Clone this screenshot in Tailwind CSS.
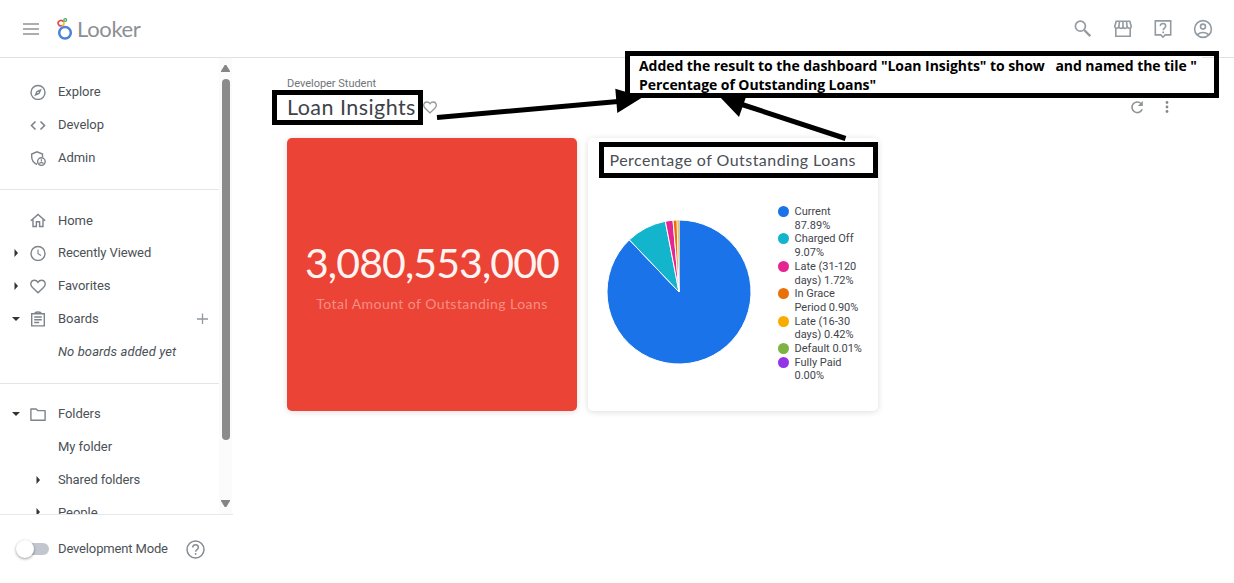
<!DOCTYPE html>
<html lang="en">
<head>
<meta charset="utf-8">
<title>Loan Insights</title>
<script src="https://cdn.jsdelivr.net/npm/@tailwindcss/browser@4"></script>
</head>
<body class="relative flex h-[583px] w-[1234px] flex-col overflow-hidden bg-white font-[Roboto,sans-serif] text-[#4b5157]">
<header class="flex h-[58px] shrink-0 items-center justify-between border-b border-[#e1e2e4] pr-[21px] pl-[23px] text-[#939ba1]">
  <div class="flex items-center">
    <svg class="h-3 w-4" viewBox="0 0 16 12" fill="none" stroke="#8f9498" stroke-width="1.6"><path d="M0 1h16M0 6h16M0 11h16"/></svg>
    <svg class="ml-[18px] h-6 w-4" viewBox="0 0 16 24" fill="none"><circle cx="8" cy="15.8" r="5.8" stroke="#4a82d9" stroke-width="2.5"/><path d="M5 8.6A2.7 2.7 0 1 1 6.300 5" stroke="#e0504a" stroke-width="1.7"/><path d="M5.200 8.700A2.500 2.500 0 0 0 6.700 5.200" stroke="#f3b73b" stroke-width="1.700"/><circle cx="8.200" cy="3" r="1.400" stroke="#4fab62" stroke-width="1.300"/></svg>
    <span class="ml-[4px] font-[Lato,sans-serif] text-[22px] leading-7 tracking-[-0.35px] text-[#8b9095]">Looker</span>
  </div>
  <div class="flex items-center gap-5">
    <svg class="size-5" viewBox="0 0 20 20" fill="none" stroke="currentColor"><circle cx="7.400" cy="7.200" r="5" stroke-width="1.700"/><path d="M11.200 11 17.300 17.100" stroke-width="2.300"/></svg>
    <svg class="size-5" viewBox="0 0 20 20" fill="none" stroke="currentColor" stroke-width="1.600"><path d="M3.200 2.300h13.600l1.400 4.900c0 2.600-3.700 2.800-4.100.3-.3 2.500-4 2.500-4.100 0-.1 2.500-3.800 2.500-4.100 0-.4 2.500-4.100 2.300-4.100-.3zM2.800 9.300v7.900h14.400V9.300M6.500 2.500l-.6 5M10 2.500v5M13.500 2.500l.6 5"/></svg>
    <svg class="size-5" viewBox="0 0 20 20" fill="none" stroke="currentColor" stroke-width="1.600"><path d="M2.300 1.900h15.400v14h-5.500L10 18.200l-2.200-2.300H2.300z"/><path d="M7.300 7c0-3.500 5.400-3.300 5.400 0 0 2-2.500 2.200-2.500 4.200M10.200 12.600v1.700"/></svg>
    <svg class="size-5" viewBox="0 0 20 20" fill="none" stroke="currentColor" stroke-width="1.600"><circle cx="10" cy="10" r="8.400"/><circle cx="10" cy="7.600" r="2.500"/><path d="M4.300 16c2.500-3.300 8.900-3.300 11.400 0"/></svg>
  </div>
</header>
<div class="flex min-h-0 grow">
  <aside class="flex w-[233px] shrink-0 flex-col">
    <div class="flex h-[456px] overflow-hidden">
      <nav class="w-[219px] shrink-0 text-[13px] tracking-[-0.050px] [&_svg]:shrink-0">
        <div class="border-b border-[#e3e5e8] pt-[17.600px] pb-[15px]">
          <div class="flex h-[32.800px] items-center pl-[30px]"><svg class="mr-3 size-4" viewBox="0 0 16 16" fill="none" stroke="#7b838b" stroke-width="1.400"><circle cx="8" cy="8.500" r="7"/><path d="M11.800 4.700 9.500 10l-5.300 2.300L6.500 7z" fill="#7b838b" stroke="none"/><circle cx="8" cy="8.500" r=".8" fill="#fff" stroke="none"/></svg>Explore</div>
          <div class="flex h-[32.800px] items-center pl-[30px]"><svg class="mr-3 size-4" viewBox="0 0 16 16" fill="none" stroke="#7b838b" stroke-width="1.600"><path d="M5.500 4.500 1.500 8.500l4 4M10.500 4.500l4 4-4 4"/></svg>Develop</div>
          <div class="flex h-[32.800px] items-center pl-[30px]"><svg class="mr-3 size-4" viewBox="0 0 16 16" fill="none" stroke="#7b838b" stroke-width="1.400"><path d="M7 14.500C3 12.500 1.700 9.800 1.700 7V4L7 1.800 12.500 4v3"/><circle cx="11.400" cy="11.600" r="3.800"/><path d="M11.400 9.200v2.400M9.300 13.500c1-1.200 3.200-1.200 4.200 0" stroke-width="1.200"/></svg>Admin</div>
        </div>
        <div class="border-b border-[#e3e5e8] pt-[14px] pb-[14.600px]">
          <div class="flex h-[32.800px] items-center pl-[30px]"><svg class="mr-3 size-4" viewBox="0 0 16 16" fill="none" stroke="#7b838b" stroke-width="1.400"><path d="M.8 8.800 8 2.400l7.200 6.400M3 7.500v7h3.400V9.700h3.200v4.800H13v-7"/></svg>Home</div>
          <div class="flex h-[32.800px] items-center pl-[14px]"><svg class="mr-3 h-2 w-1" viewBox="0 0 4 8"><path d="M.5 0 4 4 .5 8z" fill="#333"/></svg><svg class="mr-3 size-4" viewBox="0 0 16 16" fill="none" stroke="#7b838b" stroke-width="1.400"><circle cx="8" cy="8.500" r="7"/><path d="M8 4.500v4.200l3 1.800" stroke-width="1.100"/></svg><span class="tracking-[-0.120px]">Recently Viewed</span></div>
          <div class="flex h-[32.800px] items-center pl-[14px]"><svg class="mr-3 h-2 w-1" viewBox="0 0 4 8"><path d="M.5 0 4 4 .5 8z" fill="#333"/></svg><svg class="mr-3 size-4" viewBox="0 0 16 16" fill="none" stroke="#7b838b" stroke-width="1.400"><path d="M8 14.800 2.500 9.500C-.8 6.100 1.300 2.300 4.300 2.300 6 2.300 7.200 3 8 4.300 8.800 3 10 2.300 11.700 2.300c3 0 5.100 3.800 1.800 7.200z"/></svg>Favorites</div>
          <div class="flex h-[32.800px] items-center pl-[12px]"><svg class="mr-[10px] h-1 w-2" viewBox="0 0 8 4"><path d="M0 0h8L4 4z" fill="#333"/></svg><svg class="mr-3 size-4" viewBox="0 0 16 16" fill="none" stroke="#7b838b" stroke-width="1.400"><path d="M1.700 2.700h12.600v12.200H1.700zM5 2.500C5 .4 11 .4 11 2.500M4.200 6h7.600M4.200 8.700h7.600M4.200 11.500h5"/></svg>Boards<svg class="mr-[11px] ml-auto size-[11px]" viewBox="0 0 11 11" stroke="#92989d" stroke-width="1.300"><path d="M0 6h11M5.500 .5v11"/></svg></div>
          <div class="flex h-[32.800px] items-center pl-[58px] tracking-[.1px] italic">No boards added yet</div>
        </div>
        <div class="pt-[14px]">
          <div class="flex h-[32.800px] items-center pl-[12px]"><svg class="mr-[10px] h-1 w-2" viewBox="0 0 8 4"><path d="M0 0h8L4 4z" fill="#333"/></svg><svg class="mr-3 size-4" viewBox="0 0 16 16" fill="none" stroke="#7b838b" stroke-width="1.400"><path d="M.9 3h5.200l1.600 1.600h7.400v9.700H.9z" stroke-linejoin="round"/></svg>Folders</div>
          <div class="flex h-[32.800px] items-center pl-[58px]">My folder</div>
          <div class="flex h-[32.800px] items-center pl-[36px]"><svg class="mr-[18px] h-2 w-1" viewBox="0 0 4 8"><path d="M.5 0 4 4 .5 8z" fill="#333"/></svg><span class="tracking-[-0.150px]">Shared folders</span></div>
          <div class="flex h-[32.800px] items-center pl-[36px]"><svg class="mr-[18px] h-2 w-1" viewBox="0 0 4 8"><path d="M.5 0 4 4 .5 8z" fill="#333"/></svg>People</div>
        </div>
      </nav>
      <div class="flex w-[13px] shrink-0 flex-col items-center bg-[#fbfbfb] pt-[7px]">
        <svg class="h-[7px] w-[9px] shrink-0" viewBox="0 0 9 7"><path d="M3.700 0h1.600L9 6v1H0V6z" fill="#858585"/></svg>
        <div class="mt-[7px] h-[361px] w-2 shrink-0 rounded-full bg-[#8b8b8b]"></div>
        <svg class="mt-[60px] h-[7px] w-[9px] shrink-0" viewBox="0 0 9 7"><path d="M0 0h9v1L5.300 7H3.700L0 1z" fill="#858585"/></svg>
      </div>
    </div>
    <div class="flex h-[69px] items-center border-t border-[#e6e8eb] pl-4 text-[13px]">
      <div class="flex h-3 w-[33px] items-center rounded-full bg-gradient-to-r from-transparent from-40% to-[#c1c6cf] to-40%"><div class="size-[18px] rounded-full bg-white shadow-[0_1px_3px_rgba(0,0,0,.4)]"></div></div>
      <span class="ml-[9px] w-[110px] tracking-[-0.150px] whitespace-nowrap">Development Mode</span>
      <svg class="mt-px ml-[18px] size-[19px]" viewBox="0 0 19 19" fill="none" stroke="#858c92" stroke-width="1.500"><circle cx="9.500" cy="9.500" r="8.500"/><path d="M6.700 7.500c0-3.800 5.700-3.500 5.700 0 0 2-2.800 2.200-2.800 4.300M9.600 13v1.700"/></svg>
    </div>
  </aside>
  <main class="grow pt-[18px] pl-[54px]">
    <div class="text-[11px] leading-4 text-[#707579]"><span class="tracking-[-0.020px]">Developer Student</span></div>
    <div class="flex h-[30px] items-center">
      <h1 class="w-[136px] font-[Lato,sans-serif] text-[21.500px] leading-7 tracking-[.45px] whitespace-nowrap text-[#3d4349]">Loan Insights</h1>
      <svg class="size-[14px]" viewBox="0 0 16 16" fill="none" stroke="#92979b" stroke-width="1.500"><path d="M8 14.800 2.500 9.500C-.8 6.100 1.300 2.300 4.300 2.300 6 2.300 7.200 3 8 4.300 8.800 3 10 2.300 11.700 2.300c3 0 5.100 3.800 1.800 7.200z"/></svg>
      <svg class="ml-[693px] size-[14px]" viewBox="0 0 14 14" fill="none" stroke="#8e9397" stroke-width="1.600"><path d="M12.200 9.300A5.300 5.300 0 1 1 11 3.500"/><path d="M12.800 1v5H7.800z" fill="#8e9397" stroke="none"/></svg>
      <svg class="ml-[20px] h-3 w-[6px]" viewBox="0 0 6 12" fill="#85898d"><circle cx="3" cy="1.500" r="1.400"/><circle cx="3" cy="6" r="1.400"/><circle cx="3" cy="10.500" r="1.400"/></svg>
    </div>
    <div class="mt-4 flex gap-[11px]">
      <section class="flex h-[273px] w-[290px] flex-col items-center rounded-[5px] bg-[#eb4335] pt-[97px] font-[Lato,sans-serif] shadow-[0_1px_6px_rgba(0,0,0,.14)]">
        <div class="text-[41px] leading-[56px] tracking-[-0.900px] whitespace-nowrap text-[#fff4f1]">3,080,553,000</div>
        <div class="mt-[4px] text-[14px] leading-[18px] tracking-[.44px] text-[#f78f84]">Total Amount of Outstanding Loans</div>
      </section>
      <section class="h-[273px] w-[290px] rounded-[5px] bg-white shadow-[0_1px_6px_rgba(0,0,0,.14)]">
        <h2 class="pt-3 pl-[21.500px] font-[Lato,sans-serif] text-[16px] leading-5 tracking-[.46px] whitespace-nowrap text-[#4a4f55]">Percentage of Outstanding Loans</h2>
        <div class="flex pl-[17.500px]">
          <svg class="mt-[49px] h-[146px] w-[146px] shrink-0" viewBox="-73 -73 146 146" stroke="#fff" stroke-width="1">
            <path d="M0 0V-72A72 72 0 1 1-49.650-52.140z" fill="#1a73e8"/>
            <path d="M0 0-49.650-52.140A72 72 0 0 1-13.660-70.690z" fill="#12b5cb"/>
            <path d="M0 0-13.660-70.690A72 72 0 0 1-5.960-71.750z" fill="#e52592"/>
            <path d="M0 0-5.960-71.750A72 72 0 0 1-1.900-71.970z" fill="#e8710a"/>
            <path d="M0 0-1.900-71.970A72 72 0 0 1 0-72z" fill="#f9ab00" stroke-width=".6"/>
          </svg>
          <ul class="mt-[35px] ml-[26px] text-[11px] leading-[13.700px] whitespace-nowrap text-[#3f454c]">
            <li class="flex gap-[6px]"><i class="mt-px size-[11px] rounded-full bg-[#1a73e8]"></i><span>Current<br>87.89%</span></li>
            <li class="flex gap-[6px]"><i class="mt-px size-[11px] rounded-full bg-[#12b5cb]"></i><span>Charged Off<br>9.07%</span></li>
            <li class="flex gap-[6px]"><i class="mt-px size-[11px] rounded-full bg-[#e52592]"></i><span>Late (31-120<br>days) 1.72%</span></li>
            <li class="flex gap-[6px]"><i class="mt-px size-[11px] rounded-full bg-[#e8710a]"></i><span>In Grace<br>Period 0.90%</span></li>
            <li class="flex gap-[6px]"><i class="mt-px size-[11px] rounded-full bg-[#f9ab00]"></i><span>Late (16-30<br>days) 0.42%</span></li>
            <li class="flex gap-[6px]"><i class="mt-px size-[11px] rounded-full bg-[#7cb342]"></i><span>Default 0.01%</span></li>
            <li class="flex gap-[6px]"><i class="mt-px size-[11px] rounded-full bg-[#9334e6]"></i><span>Fully Paid<br>0.00%</span></li>
          </ul>
        </div>
      </section>
    </div>
  </main>
</div>
<!-- Annotations over the dashboard -->
<div class="absolute top-[90px] left-[272px] h-[35px] w-[151px] border-[5px] border-black"></div>
<div class="absolute top-[142px] left-[599px] h-[36px] w-[279px] border-[5px] border-black"></div>
<div class="absolute top-[51px] left-[625px] h-[47px] w-[594px] border-[5px] border-black"><p class="h-full w-[572px] bg-white pl-[9px] font-['Open_Sans',sans-serif] text-[14px] leading-[19px] font-bold tracking-[-0.060px] whitespace-pre text-black">Added the result to the dashboard "Loan Insights" to show   and named the tile "
Percentage of Outstanding Loans"</p></div>
<svg class="absolute top-0 left-0 h-[200px] w-[900px]" viewBox="0 0 900 200" stroke="#000" stroke-width="5"><path d="M437 117.500 618 101.500M845.500 138.500 742 104.500"/><path d="M615.300 88.800 617.300 113 643 97zM719 96l20 21 7-20z" fill="#000" stroke="none"/></svg>
</body>
</html>
